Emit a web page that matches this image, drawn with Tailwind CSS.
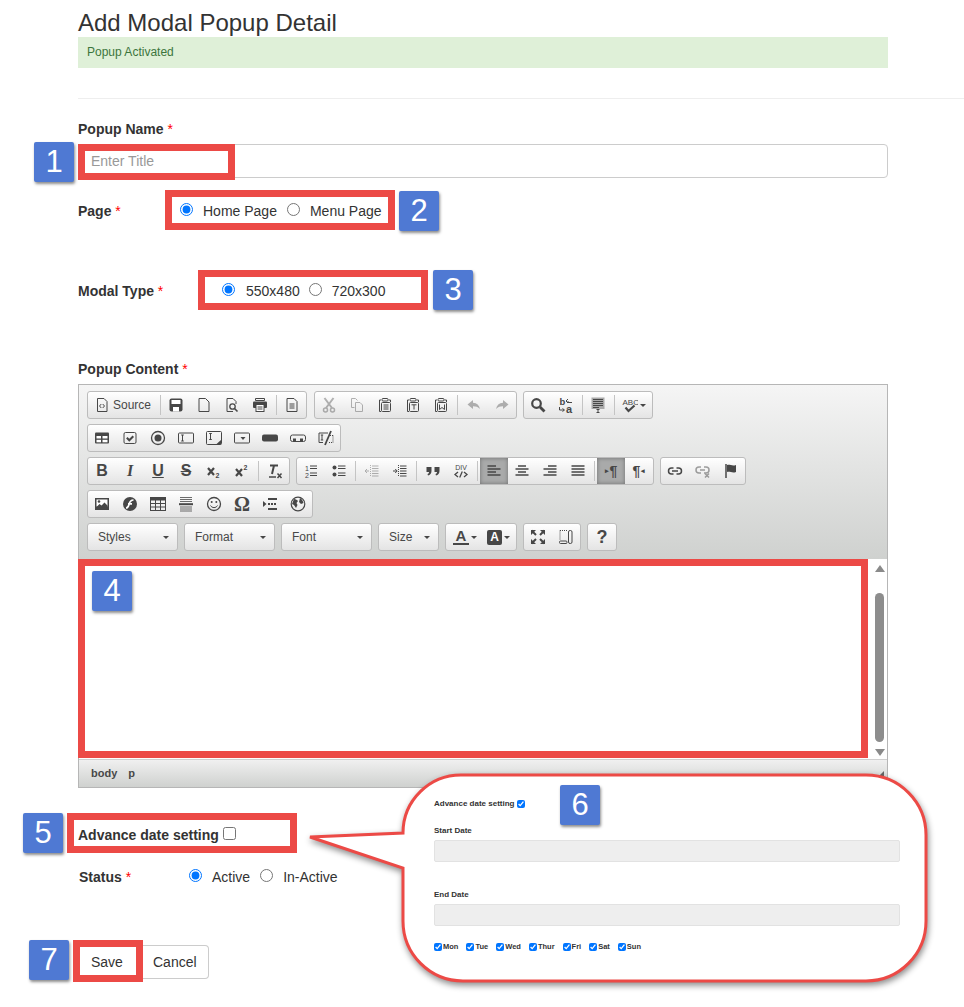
<!DOCTYPE html>
<html lang="en">
<head>
  <meta charset="UTF-8" />
  <title>Add Modal Popup Detail</title>
  <script src="https://cdn.jsdelivr.net/npm/@tailwindcss/browser@4"></script>
</head>
<body class="bg-white">
<div class="relative w-[964px] h-[1007px] overflow-hidden pl-[78px] font-['Liberation_Sans',Arial,sans-serif] text-[14px] text-[#333]">

  <h1 class="mt-[9px] text-[24px] leading-[28px] text-[#333]">Add Modal Popup Detail</h1>
  <div class="w-[810px] h-[31px] pl-[9px] bg-[#dff0d8] text-[12px] leading-[30px] text-[#3c763d]">Popup Activated</div>
  <hr class="mt-[30px] border-t border-[#eeeeee]" />

  <!-- Form -->
  <div class="w-[810px]">
    <label class="block mt-[20px] h-[20px] leading-[20px] font-bold">Popup Name <span class="text-[#ff0000] font-normal">*</span></label>
    <input type="text" placeholder="Enter Title" class="block mt-[5px] w-full h-[34px] px-[12px] border border-[#cccccc] rounded-[4px] text-[14px] placeholder:text-[#999999]" />

    <div class="flex items-center mt-[23px] h-[20px]">
      <label class="w-[102px] font-bold">Page <span class="text-[#ff0000] font-normal">*</span></label>
      <input type="radio" name="page" checked class="w-[13px] h-[13px] mb-[3px]" />
      <span class="ml-[10px]">Home Page</span>
      <input type="radio" name="page" class="ml-[10px] w-[13px] h-[13px] mb-[3px]" />
      <span class="ml-[10px]">Menu Page</span>
    </div>

    <div class="flex items-center mt-[60px] h-[20px]">
      <label class="w-[144px] font-bold">Modal Type <span class="text-[#ff0000] font-normal">*</span></label>
      <input type="radio" name="modal" checked class="w-[13px] h-[13px] mb-[3px]" />
      <span class="ml-[11px]">550x480</span>
      <input type="radio" name="modal" class="ml-[9px] w-[13px] h-[13px] mb-[3px]" />
      <span class="ml-[10px]">720x300</span>
    </div>

    <label class="block mt-[58px] h-[20px] leading-[20px] font-bold">Popup Content <span class="text-[#ff0000] font-normal">*</span></label>

    <!-- Editor -->
    <div class="mt-[5px] h-[404px] border border-[#b6b6b6] flex flex-col">
      <div class="h-[174px] pt-[6px] pl-[8px] flex flex-col gap-[5px] bg-linear-to-b from-[#f5f5f5] to-[#cfd1cf] [&_a]:w-[28px] [&_a]:h-[26px] [&_a]:flex [&_a]:items-center [&_a]:justify-center [&_a]:shrink-0 [&_svg]:w-[16px] [&_svg]:h-[16px] [&_svg]:fill-none [&_svg]:stroke-[#474747] [&_i]:w-px [&_i]:h-[20px] [&_i]:bg-[#c4c4c4] [&_i]:mx-[1.5px] [&_i]:shrink-0">

        <!-- Row 1 -->
        <div class="flex gap-[6px]">
          <div class="flex items-center h-[28px] border border-[#bcbcbc] rounded-[3px] bg-linear-to-b from-white to-[#e4e4e4]">
            <div class="w-[70px] flex items-center pl-[6px] gap-[3px] text-[12px] text-[#484848]">
              <svg viewBox="0 0 16 16"><path d="M3.500 1.500h6.500l3 3v10h-9.500z"/><path d="M7.300 7 5.500 9l1.800 2M8.700 7l1.800 2-1.800 2"/></svg>Source
            </div>
            <i></i>
            <a><svg viewBox="0 0 16 16"><rect x="1.500" y="1.500" width="13" height="13" rx="2" fill="#474747" stroke="none"/><rect x="3.500" y="3" width="9" height="4" fill="#fff" stroke="none"/><rect x="5" y="10" width="6" height="4.500" fill="#fff" stroke="none"/></svg></a>
            <a><svg viewBox="0 0 16 16"><path d="M3 1.500h6.500l3.500 3.500v9.500H3z"/></svg></a>
            <a><svg viewBox="0 0 16 16"><path d="M9 14.500H3v-13h6l3 3V7"/><circle cx="8.500" cy="9.500" r="2.700" stroke-width="1.300"/><path d="m10.500 11.500 3 3" stroke-width="1.600"/></svg></a>
            <a><svg viewBox="0 0 16 16"><path d="M3.500 1.500h9v2h-9z"/><rect x="1" y="4.500" width="14" height="6.500" rx="1" fill="#474747" stroke="none"/><rect x="4" y="7.500" width="8" height="7" fill="#fff"/><path d="M5.500 10h5M5.500 12h5" stroke-width="1"/></svg></a>
            <i></i>
            <a><svg viewBox="0 0 16 16"><path d="M3 1.500h7l3 3v10H3z"/><path d="M5.500 7h5M5.500 9h5M5.500 11h5"/></svg></a>
          </div>
          <div class="ml-[1px] flex items-center h-[28px] border border-[#bcbcbc] rounded-[3px] bg-linear-to-b from-white to-[#e4e4e4] [&_i]:mx-[2px]!">
            <a class="opacity-40"><svg viewBox="0 0 16 16"><circle cx="4.500" cy="13" r="2" stroke-width="1.500"/><circle cx="11.500" cy="13" r="2" stroke-width="1.500"/><path d="M3.500 1 11 11M12.500 1 5 11" stroke-width="2"/></svg></a>
            <a class="opacity-40"><svg viewBox="0 0 16 16"><path d="M2.500 1.500h4l2 2M2.500 1.500v9h3"/><path d="M6.500 5.500h4.500l2.500 2.500v6.500h-7z"/></svg></a>
            <a><svg viewBox="0 0 16 16"><path d="M4 3H2.500v11.500H4"/><path d="M11.500 3h2v2"/><rect x="5" y="1.500" width="6" height="2.500" rx="1"/><rect x="4.500" y="5.500" width="9" height="9" rx="1"/><path d="M6.500 8h5M6.500 10h5M6.500 12h5"/></svg></a>
            <a><svg viewBox="0 0 16 16"><path d="M4 3H2.500v11.500H4"/><path d="M11.500 3h2v2"/><rect x="5" y="1.500" width="6" height="2.500" rx="1"/><rect x="4.500" y="5.500" width="9" height="9" rx="1"/><path d="M6.500 7.800h5M9 7.800V12.500"/></svg></a>
            <a><svg viewBox="0 0 16 16"><path d="M4 3H2.500v11.500H4"/><path d="M11.500 3h2v2"/><rect x="5" y="1.500" width="6" height="2.500" rx="1"/><rect x="4.500" y="5.500" width="9" height="9" rx="1"/><path d="M6.500 7.500v5l2.500-2 2.500 2v-5"/></svg></a>
            <i></i>
            <a class="opacity-40"><svg viewBox="0 0 16 16"><path d="M7 3 1.500 7.500 7 12V9.300c3 0 5 .7 7 2.700-.8-3.800-3-6-7-6.300z" fill="#474747" stroke="none"/></svg></a>
            <a class="opacity-40"><svg viewBox="0 0 16 16"><path d="M9 3l5.500 4.500L9 12V9.300c-3 0-5 .7-7 2.700.8-3.800 3-6 7-6.300z" fill="#474747" stroke="none"/></svg></a>
          </div>
          <div class="flex items-center h-[28px] border border-[#bcbcbc] rounded-[3px] bg-linear-to-b from-white to-[#e4e4e4]">
            <a><svg viewBox="0 0 16 16"><circle cx="6.500" cy="6.500" r="4.300" stroke-width="2.200"/><path d="m10 10 4.500 4.500" stroke-width="2.800"/></svg></a>
            <a><svg viewBox="0 0 16 16"><text x="1.500" y="7.500" font-size="9.500" font-weight="700" fill="#474747" stroke="none">b</text><text x="8" y="15.500" font-size="11" font-weight="700" fill="#474747" stroke="none">a</text><path d="M14 5.500h-4V4M10 2l-2 2 2 2M1.500 10v3H6M4.500 11.500 6.500 13l-2 1.500" stroke-width="1"/></svg></a>
            <i></i>
            <a><svg viewBox="0 0 16 16"><rect x="1.500" y="0.500" width="13" height="11.500" fill="#a9a9a9" stroke="none"/><path d="M3 2.500h10M3 4.500h10M3 6.500h10M3 8.500h10M3 10.500h6" stroke-width="1.100"/><path d="M8 12.500v3M6.500 12.500h3M6.500 15.500h3" stroke-width="1"/></svg></a>
            <i></i>
            <div class="w-[36px] flex items-center justify-center gap-[2px]">
              <svg viewBox="0 0 16 16"><text x="0.500" y="7.500" font-size="8" fill="#474747" stroke="none">ABC</text><path d="m3.500 10.500 3 3.500L12.500 8.500" stroke-width="2.200"/></svg>
              <span class="w-0 h-0 border-x-[3px] border-x-transparent border-t-[3px] border-t-[#474747]"></span>
            </div>
          </div>
        </div>

        <!-- Row 2 -->
        <div class="flex gap-[6px]">
          <div class="flex items-center h-[28px] border border-[#bcbcbc] rounded-[3px] bg-linear-to-b from-white to-[#e4e4e4]">
            <a><svg viewBox="0 0 16 16"><rect x="1" y="2.500" width="14" height="11" rx="1" fill="#474747" stroke="none"/><rect x="2.500" y="6" width="4.500" height="2.500" fill="#fff" stroke="none"/><rect x="8.500" y="6" width="5" height="2.500" fill="#fff" stroke="none"/><rect x="2.500" y="9.800" width="4.500" height="2.500" fill="#fff" stroke="none"/><rect x="8.500" y="9.800" width="5" height="2.500" fill="#fff" stroke="none"/></svg></a>
            <a><svg viewBox="0 0 16 16"><rect x="2" y="2.500" width="12" height="11" rx="1.500"/><path d="m4.800 7.800 2.500 2.500 4-4" stroke-width="2"/></svg></a>
            <a><svg viewBox="0 0 16 16"><circle cx="8" cy="8" r="6.500" stroke-width="1.300"/><circle cx="8" cy="8" r="3.500" fill="#474747" stroke="none"/></svg></a>
            <a><svg viewBox="0 0 16 16"><rect x="0.500" y="3" width="15" height="10" rx="1"/><path d="M4.500 5v6M3.200 5h2.600M3.200 11h2.600"/></svg></a>
            <a><svg viewBox="0 0 16 16"><rect x="0.500" y="1.500" width="15" height="13" rx="1"/><path d="M4.500 3.500v6M3.200 3.500h2.600M3.200 9.500h2.600"/><path d="m15 10-5 4.500h5z" fill="#474747" stroke="none"/></svg></a>
            <a><svg viewBox="0 0 16 16"><rect x="0.500" y="3" width="15" height="10" rx="1"/><path d="M6.500 7 9 10l2.500-3z" fill="#474747" stroke="none"/></svg></a>
            <a><svg viewBox="0 0 16 16"><rect x="0" y="4.500" width="16" height="7" rx="2" fill="#474747" stroke="none"/></svg></a>
            <a><svg viewBox="0 0 16 16"><rect x="0.500" y="5" width="15" height="6.500" rx="2"/><path d="M3 8.500h3v2.500H3zM10 8.500h3v2.500h-3z" fill="#474747" stroke="none"/></svg></a>
            <a><svg viewBox="0 0 16 16"><path d="M10 3H1v9.500h4" /><path d="M4 5v5M2.800 5h2.400M2.800 10h2.400"/><path d="M13 1 7 15" stroke-width="1.800"/><path d="M12 5.500h3.500M15 5.500v7M11 12.500h4" stroke-dasharray="1 1"/></svg></a>
          </div>
        </div>

        <!-- Row 3 -->
        <div class="flex gap-[6px]">
          <div class="flex items-center h-[28px] border border-[#bcbcbc] rounded-[3px] bg-linear-to-b from-white to-[#e4e4e4] text-[#474747] [&_a]:text-[16px] [&_a]:font-bold [&_i]:mx-[2px]!">
            <a>B</a>
            <a class="italic font-['Liberation_Serif',serif]">I</a>
            <a class="underline">U</a>
            <a class="line-through">S</a>
            <a><svg viewBox="0 0 16 16"><path d="M2 5 8 12M8 5 2 12" stroke-width="2.200"/><text x="9.500" y="14.500" font-size="7" font-weight="700" fill="#474747" stroke="none">2</text></svg></a>
            <a><svg viewBox="0 0 16 16"><path d="M2 6 8 13M8 6 2 13" stroke-width="2.200"/><text x="9.500" y="7" font-size="7" font-weight="700" fill="#474747" stroke="none">2</text></svg></a>
            <i></i>
            <a><svg viewBox="0 0 16 16"><path d="M3 2.500h8M7 2.500 5 11" stroke-width="2"/><path d="M2 14h7" stroke-width="1.500"/><path d="m10.500 10.500 4 4.500M14.500 10.500l-4 4.500" stroke-width="1.500"/></svg></a>
          </div>
          <div class="flex items-center h-[28px] border border-[#bcbcbc] rounded-[3px] bg-linear-to-b from-white to-[#e4e4e4]">
            <a><svg viewBox="0 0 16 16"><text x="2" y="7.500" font-size="7" fill="#474747" stroke="none">1</text><text x="2" y="14.500" font-size="7" fill="#474747" stroke="none">2</text><path d="M7 3h7M7 5.500h7M7 10h7M7 12.500h7" stroke-width="1.200"/></svg></a>
            <a><svg viewBox="0 0 16 16"><circle cx="3.500" cy="4.500" r="2" fill="#474747" stroke="none"/><circle cx="3.500" cy="11.500" r="2" fill="#474747" stroke="none"/><path d="M7 3h7.500M7 5.500h7.500M7 10h7.500M7 12.500h7.500" stroke-width="1.200"/></svg></a>
            <i class="mx-[2px]!"></i>
            <a class="opacity-40"><svg viewBox="0 0 16 16"><path d="M1 8h4M3 6 1 8l2 2" stroke-width="1"/><path d="M6.500 2v12" stroke-dasharray="1 1"/><path d="M8 3h6.500M8 5.500h6.500M8 8h6.500M8 10.500h6.500M8 13h6.500" stroke-width="1"/></svg></a>
            <a><svg viewBox="0 0 16 16"><path d="M1 8h4M3.200 6l2 2-2 2" stroke-width="1"/><path d="M6.500 2v12" stroke-dasharray="1 1"/><path d="M8 3h6.500M8 5.500h6.500M8 8h6.500M8 10.500h6.500M8 13h6.500" stroke-width="1"/></svg></a>
            <i class="mx-[2px]!"></i>
            <a><svg viewBox="0 0 16 16"><path d="M1.500 4h5v4c0 2.500-1.500 4-3.500 4.500L2.500 11c1-.3 1.500-1 1.500-2H1.500zM9.500 4h5v4c0 2.500-1.500 4-3.500 4.500L10.500 11c1-.3 1.500-1 1.500-2H9.500z" fill="#474747" stroke="none"/></svg></a>
            <a><svg viewBox="0 0 16 16"><text x="8" y="7" font-size="7" text-anchor="middle" fill="#474747" stroke="none">DIV</text><path d="M5 9 2 11.500 5 14M11 9l3 2.500L11 14M9.300 8.500l-2.600 6" stroke-width="1.300"/></svg></a>
            <i class="mx-[2px]!"></i>
            <a class="bg-[#a9aaaa] shadow-[inset_0_0_4px_rgba(0,0,0,0.35)]"><svg viewBox="0 0 16 16"><path d="M1.500 3h8.500M1.500 6h13M1.500 9h8.500M1.500 12h13" stroke-width="1.600"/></svg></a>
            <a><svg viewBox="0 0 16 16"><path d="M4 3h8M1.500 6h13M4 9h8M1.500 12h13" stroke-width="1.600"/></svg></a>
            <a><svg viewBox="0 0 16 16"><path d="M6 3h8.500M1.500 6h13M6 9h8.500M1.500 12h13" stroke-width="1.600"/></svg></a>
            <a><svg viewBox="0 0 16 16"><path d="M1.500 3h13M1.500 6h13M1.500 9h13M1.500 12h13" stroke-width="1.600"/></svg></a>
            <i class="mx-[2px]!"></i>
            <a class="bg-[#a9aaaa] shadow-[inset_0_0_4px_rgba(0,0,0,0.35)] text-[#474747] text-[14px] font-bold"><span class="text-[7px] mr-[1px]">▸</span>¶</a>
            <a class="text-[#474747] text-[14px] font-bold">¶<span class="text-[7px] ml-[1px]">◂</span></a>
          </div>
          <div class="flex items-center h-[28px] border border-[#bcbcbc] rounded-[3px] bg-linear-to-b from-white to-[#e4e4e4]">
            <a><svg viewBox="0 0 16 16"><path d="M6.500 5H4.500a3 3 0 0 0 0 6h2M9.500 5h2a3 3 0 0 1 0 6h-2M5 8h6" stroke-width="1.500"/></svg></a>
            <a class="opacity-50"><svg viewBox="0 0 16 16"><path d="M6 4H4a3 3 0 0 0 0 6h2M9 4h2a3 3 0 0 1 0 6H9M5 7h5" stroke-width="1.500"/><path d="m10 10.500 4 4M14 10.500l-4 4" stroke-width="1.500"/></svg></a>
            <a><svg viewBox="0 0 16 16"><path d="M3 1v14" stroke-width="1.500"/><path d="M4 2c3-1 5 1.500 9 0v7c-4 1.500-6-1-9 0z" fill="#474747" stroke="none"/></svg></a>
          </div>
        </div>

        <!-- Row 4 -->
        <div class="flex gap-[6px]">
          <div class="flex items-center h-[28px] border border-[#bcbcbc] rounded-[3px] bg-linear-to-b from-white to-[#e4e4e4]">
            <a><svg viewBox="0 0 16 16"><rect x="1" y="2" width="14" height="12" fill="#474747" stroke="none"/><rect x="2.500" y="3.500" width="11" height="7" fill="#fff" stroke="none"/><circle cx="5" cy="5.500" r="1.300" fill="#474747" stroke="none"/><path d="m2.500 11 3-3 2 1.500 3-3 3 3v2.500z" fill="#474747" stroke="none"/></svg></a>
            <a><svg viewBox="0 0 16 16"><circle cx="8" cy="8" r="7" fill="#474747" stroke="none"/><path d="M11.500 4C8 4 7.500 6.500 7 8.500S6 12 4 12M6 7.800h4" stroke="#fff" stroke-width="1.700"/></svg></a>
            <a><svg viewBox="0 0 16 16"><rect x="0.500" y="1.500" width="15" height="13"/><path d="M0.500 3h15" stroke-width="3"/><path d="M0.500 7.500h15M0.500 11h15M5.500 4v10M10.500 4v10"/></svg></a>
            <a><svg viewBox="0 0 16 16"><path d="M2 1.500h12M2 3.500h12M2 5.500h12M2 11h12M2 13h12M2 15h12" stroke-width="0.800"/><path d="M1 8.200h14" stroke-width="2"/></svg></a>
            <a><svg viewBox="0 0 16 16"><circle cx="8" cy="8" r="6.500" stroke-width="1.300"/><circle cx="5.700" cy="6" r="1" fill="#474747" stroke="none"/><circle cx="10.300" cy="6" r="1" fill="#474747" stroke="none"/><path d="M4.500 9.500c1.500 2.800 5.500 2.800 7 0"/></svg></a>
            <a class="text-[#474747] text-[20px] font-bold font-['Liberation_Serif',serif]">Ω</a>
            <a><svg viewBox="0 0 16 16"><path d="M6 3h9M6 13h9" stroke-width="2"/><path d="M6 8h9" stroke-width="2" stroke-dasharray="2 1"/><path d="M1 5v6l3.500-3z" fill="#474747" stroke="none"/></svg></a>
            <a><svg viewBox="0 0 16 16"><circle cx="8" cy="8" r="6.800" stroke-width="1.200"/><path d="M4 3c2 0 3 1 4 2L6.500 7l1 2-1.500 3-2-3-2-1zM10 2c2 1 3 3 3.500 5L11 8 9 6z" fill="#474747" stroke="none"/></svg></a>
          </div>
        </div>

        <!-- Row 5 -->
        <div class="flex gap-[6px] text-[12px] text-[#484848]">
          <div class="flex items-center justify-between w-[91px] h-[28px] pl-[10px] pr-[8px] border border-[#bcbcbc] rounded-[3px] bg-linear-to-b from-white to-[#e4e4e4]">Styles<span class="w-0 h-0 border-x-[3px] border-x-transparent border-t-[3px] border-t-[#474747]"></span></div>
          <div class="flex items-center justify-between w-[91px] h-[28px] pl-[10px] pr-[8px] border border-[#bcbcbc] rounded-[3px] bg-linear-to-b from-white to-[#e4e4e4]">Format<span class="w-0 h-0 border-x-[3px] border-x-transparent border-t-[3px] border-t-[#474747]"></span></div>
          <div class="flex items-center justify-between w-[91px] h-[28px] pl-[10px] pr-[8px] border border-[#bcbcbc] rounded-[3px] bg-linear-to-b from-white to-[#e4e4e4]">Font<span class="w-0 h-0 border-x-[3px] border-x-transparent border-t-[3px] border-t-[#474747]"></span></div>
          <div class="flex items-center justify-between w-[61px] h-[28px] pl-[10px] pr-[8px] border border-[#bcbcbc] rounded-[3px] bg-linear-to-b from-white to-[#e4e4e4]">Size<span class="w-0 h-0 border-x-[3px] border-x-transparent border-t-[3px] border-t-[#474747]"></span></div>
          <div class="flex items-center w-[72px] h-[28px] pl-[7px] border border-[#bcbcbc] rounded-[3px] bg-linear-to-b from-white to-[#e4e4e4]">
            <span class="w-[16px] text-center text-[15px] font-bold leading-[14px] border-b-2 border-[#474747]">A</span>
            <span class="ml-[2px] w-0 h-0 border-x-[3px] border-x-transparent border-t-[3px] border-t-[#474747]"></span>
            <span class="ml-[10px] w-[15px] h-[15px] rounded-[2px] bg-[#474747] text-white text-center text-[12px] font-bold leading-[15px]">A</span>
            <span class="ml-[2px] w-0 h-0 border-x-[3px] border-x-transparent border-t-[3px] border-t-[#474747]"></span>
          </div>
          <div class="flex items-center w-[58px] h-[28px] border border-[#bcbcbc] rounded-[3px] bg-linear-to-b from-white to-[#e4e4e4]">
            <a><svg viewBox="0 0 16 16"><path d="M1.500 1.500 6 6M14.500 1.500 10 6M1.500 14.500 6 10M14.500 14.500 10 10" stroke-width="2"/><path d="M1 1h5L1 6zM15 1h-5l5 5zM1 15h5l-5-5zM15 15h-5l5-5z" fill="#474747" stroke="none"/></svg></a>
            <a><svg viewBox="0 0 16 16"><path d="M2 1.500h7M2 1.500v9" stroke-dasharray="1 1"/><rect x="10.500" y="1.500" width="3.500" height="13" rx="1.500"/><rect x="1.500" y="12" width="7.500" height="2.500" rx="1"/></svg></a>
          </div>
          <div class="flex items-center justify-center w-[30px] h-[28px] border border-[#bcbcbc] rounded-[3px] bg-linear-to-b from-white to-[#e4e4e4] text-[18px] font-bold">?</div>
        </div>
      </div>

      <!-- Editing area and scrollbar -->
      <div class="h-[201px] flex justify-end border-b border-[#cfcfcf]">
        <div class="w-[15px] h-full flex flex-col items-center">
          <span class="mt-[6px] w-0 h-0 border-x-[5px] border-x-transparent border-b-[7px] border-b-[#8a8a8a]"></span>
          <span class="mt-[21px] w-[9px] h-[149px] rounded-full bg-[#8d8d8d]"></span>
          <span class="mt-[7px] w-0 h-0 border-x-[5px] border-x-transparent border-t-[7px] border-t-[#8a8a8a]"></span>
        </div>
      </div>
      <div class="flex-1 flex items-center gap-[11px] pl-[12px] bg-linear-to-b from-[#f0f0f0] to-[#cfd1cf] text-[11px] font-bold text-[#484848]">
        <span>body</span><span>p</span>
        <span class="ml-auto mr-[3px] mb-[1px] w-0 h-0 border-l-[5px] border-l-transparent border-b-[5px] border-b-[#666666]"></span>
      </div>
    </div>

    <div class="flex items-center mt-[37px] h-[20px] font-bold">
      Advance date setting
      <input type="checkbox" class="ml-[4px] w-[13px] h-[13px] mb-[3px]" />
    </div>

    <div class="flex items-center mt-[22px] h-[20px] ml-[1px]">
      <label class="w-[110px] font-bold">Status <span class="text-[#ff0000] font-normal">*</span></label>
      <input type="radio" name="status" checked class="w-[13px] h-[13px] mb-[3px]" />
      <span class="ml-[10px]">Active</span>
      <input type="radio" name="status" class="ml-[10px] w-[13px] h-[13px] mb-[3px]" />
      <span class="ml-[10px]">In-Active</span>
    </div>

    <div class="flex mt-[58px]">
      <button class="w-[65px] h-[34px] pl-[13px] text-left bg-white">Save</button>
      <button class="w-[66px] h-[34px] pl-[10px] text-left bg-white border border-l-0 border-[#cccccc] rounded-r-[4px]">Cancel</button>
    </div>
  </div>

  <!-- Red annotation boxes -->
  <div class="absolute left-[78px] top-[144px] w-[157px] h-[36px] border-[7px] border-[#ec4a46]"></div>
  <div class="absolute left-[165px] top-[190px] w-[230px] h-[40px] border-[7px] border-[#ec4a46]"></div>
  <div class="absolute left-[198px] top-[270px] w-[230px] h-[40px] border-[7px] border-[#ec4a46]"></div>
  <div class="absolute left-[78px] top-[559px] w-[790px] h-[199px] border-[7px] border-[#ec4a46]"></div>
  <div class="absolute left-[67px] top-[813px] w-[230px] h-[40px] border-[7px] border-[#ec4a46]"></div>
  <div class="absolute left-[73px] top-[940px] w-[70px] h-[42px] border-[7px] border-[#ec4a46]"></div>

  <!-- Callout balloon -->
  <div class="absolute left-[300px] top-[770px] w-[640px] h-[225px]">
    <svg class="absolute inset-0 drop-shadow-[1px_3px_3px_rgba(0,0,0,0.45)]" width="640" height="225" viewBox="0 0 640 225">
      <path d="M162 5H566A60 60 0 0 1 626 65V151A60 60 0 0 1 566 211H163A60 60 0 0 1 103 151V98L10 67L103 63A58 58 0 0 1 162 5Z" fill="#fff" stroke="#ec4a46" stroke-width="3"/>
    </svg>
    <div class="absolute left-[134px] top-[28px] w-[466px] text-[8px] font-bold text-[#333]">
      <div class="flex items-center h-[12px]">Advance date setting<input type="checkbox" checked class="ml-[3px] w-[8px] h-[8px]" /></div>
      <div class="mt-[16px] h-[10px] leading-[10px]">Start Date</div>
      <div class="mt-[4px] h-[22px] bg-[#eeeeee] border border-[#e2e2e2] rounded-[2px]"></div>
      <div class="mt-[28px] h-[10px] leading-[10px]">End Date</div>
      <div class="mt-[4px] h-[22px] bg-[#eeeeee] border border-[#e2e2e2] rounded-[2px]"></div>
      <div class="mt-[16px] flex items-center h-[10px] gap-[8px] text-[7.5px]">
        <span class="flex items-center"><input type="checkbox" checked class="w-[8px] h-[8px] mr-[1px]" />Mon</span>
        <span class="flex items-center"><input type="checkbox" checked class="w-[8px] h-[8px] mr-[1px]" />Tue</span>
        <span class="flex items-center"><input type="checkbox" checked class="w-[8px] h-[8px] mr-[1px]" />Wed</span>
        <span class="flex items-center"><input type="checkbox" checked class="w-[8px] h-[8px] mr-[1px]" />Thur</span>
        <span class="flex items-center"><input type="checkbox" checked class="w-[8px] h-[8px] mr-[1px]" />Fri</span>
        <span class="flex items-center"><input type="checkbox" checked class="w-[8px] h-[8px] mr-[1px]" />Sat</span>
        <span class="flex items-center"><input type="checkbox" checked class="w-[8px] h-[8px] mr-[1px]" />Sun</span>
      </div>
    </div>
  </div>

  <!-- Numbered badges -->
  <div class="absolute left-[34px] top-[142px] w-[40px] h-[40px] flex items-center justify-center bg-[#4f79d3] rounded-[2px] shadow-[1px_2px_3px_rgba(0,0,0,0.45)] text-white text-[31px]">1</div>
  <div class="absolute left-[399px] top-[191px] w-[40px] h-[40px] flex items-center justify-center bg-[#4f79d3] rounded-[2px] shadow-[1px_2px_3px_rgba(0,0,0,0.45)] text-white text-[31px]">2</div>
  <div class="absolute left-[433px] top-[270px] w-[40px] h-[40px] flex items-center justify-center bg-[#4f79d3] rounded-[2px] shadow-[1px_2px_3px_rgba(0,0,0,0.45)] text-white text-[31px]">3</div>
  <div class="absolute left-[92px] top-[571px] w-[40px] h-[40px] flex items-center justify-center bg-[#4f79d3] rounded-[2px] shadow-[1px_2px_3px_rgba(0,0,0,0.45)] text-white text-[31px]">4</div>
  <div class="absolute left-[23px] top-[813px] w-[40px] h-[40px] flex items-center justify-center bg-[#4f79d3] rounded-[2px] shadow-[1px_2px_3px_rgba(0,0,0,0.45)] text-white text-[31px]">5</div>
  <div class="absolute left-[560px] top-[785px] w-[40px] h-[40px] flex items-center justify-center bg-[#4f79d3] rounded-[2px] shadow-[1px_2px_3px_rgba(0,0,0,0.45)] text-white text-[31px]">6</div>
  <div class="absolute left-[29px] top-[940px] w-[40px] h-[40px] flex items-center justify-center bg-[#4f79d3] rounded-[2px] shadow-[1px_2px_3px_rgba(0,0,0,0.45)] text-white text-[31px]">7</div>
</div>
</body>
</html>
